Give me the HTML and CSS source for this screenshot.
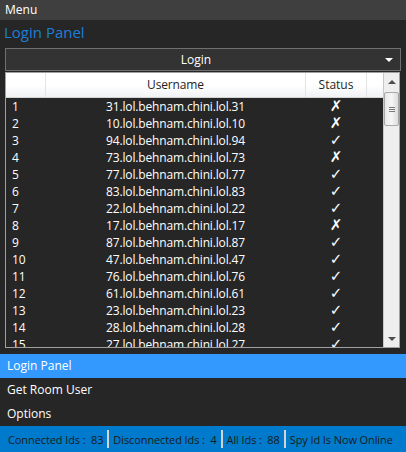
FILE: index.html
```html
<!DOCTYPE html>
<html>
<head>
<meta charset="utf-8">
<link rel="stylesheet" href="styles.css">
</head>
<body>
<div class="app">
  <div class="menubar">Menu</div>
  <div class="title">Login Panel</div>
  <div class="dropdown">
    <span class="dd-text">Login</span>
    <span class="dd-arrow"></span>
  </div>
  <div class="grid">
    <div class="grid-body">
      <div class="hdr">
        <div class="c-num"></div>
        <div class="c-user">Username</div>
        <div class="c-status">Status</div>
        <div class="c-fill"></div>
      </div>
      <div class="rows">
        <div class="row"><div class="c-num">1</div><div class="c-user">31.lol.behnam.chini.lol.31</div><div class="c-status">✗</div></div>
        <div class="row"><div class="c-num">2</div><div class="c-user">10.lol.behnam.chini.lol.10</div><div class="c-status">✗</div></div>
        <div class="row"><div class="c-num">3</div><div class="c-user">94.lol.behnam.chini.lol.94</div><div class="c-status">✓</div></div>
        <div class="row"><div class="c-num">4</div><div class="c-user">73.lol.behnam.chini.lol.73</div><div class="c-status">✗</div></div>
        <div class="row"><div class="c-num">5</div><div class="c-user">77.lol.behnam.chini.lol.77</div><div class="c-status">✓</div></div>
        <div class="row"><div class="c-num">6</div><div class="c-user">83.lol.behnam.chini.lol.83</div><div class="c-status">✓</div></div>
        <div class="row"><div class="c-num">7</div><div class="c-user">22.lol.behnam.chini.lol.22</div><div class="c-status">✓</div></div>
        <div class="row"><div class="c-num">8</div><div class="c-user">17.lol.behnam.chini.lol.17</div><div class="c-status">✗</div></div>
        <div class="row"><div class="c-num">9</div><div class="c-user">87.lol.behnam.chini.lol.87</div><div class="c-status">✓</div></div>
        <div class="row"><div class="c-num">10</div><div class="c-user">47.lol.behnam.chini.lol.47</div><div class="c-status">✓</div></div>
        <div class="row"><div class="c-num">11</div><div class="c-user">76.lol.behnam.chini.lol.76</div><div class="c-status">✓</div></div>
        <div class="row"><div class="c-num">12</div><div class="c-user">61.lol.behnam.chini.lol.61</div><div class="c-status">✓</div></div>
        <div class="row"><div class="c-num">13</div><div class="c-user">23.lol.behnam.chini.lol.23</div><div class="c-status">✓</div></div>
        <div class="row"><div class="c-num">14</div><div class="c-user">28.lol.behnam.chini.lol.28</div><div class="c-status">✓</div></div>
        <div class="row"><div class="c-num">15</div><div class="c-user">27.lol.behnam.chini.lol.27</div><div class="c-status">✓</div></div>
      </div>
    </div>
    <div class="vscroll">
      <div class="sb-btn"><span class="tri-up"></span></div>
      <div class="sb-thumb"><span class="grip"></span><span class="grip"></span><span class="grip"></span></div>
      <div class="sb-track"></div>
      <div class="sb-btn"><span class="tri-down"></span></div>
    </div>
  </div>
  <div class="nav">
    <div class="nav-item active">Login Panel</div>
    <div class="nav-item">Get Room User</div>
    <div class="nav-item">Options</div>
  </div>
  <div class="statusbar">
    <span class="st">Connected Ids :&nbsp; 83</span>
    <span class="sep"></span>
    <span class="st">Disconnected Ids :&nbsp; 4</span>
    <span class="sep"></span>
    <span class="st">All Ids :&nbsp; 88</span>
    <span class="sep"></span>
    <span class="st">Spy Id Is Now Online</span>
  </div>
</div>
</body>
</html>
```
FILE: styles.css
```css
html, body {
  margin: 0;
  padding: 0;
  background: #262626;
}
body {
  font-family: "Open Sans", "Noto Sans", sans-serif;
  font-size: 12px;
  color: #ffffff;
}
.app {
  width: 406px;
  height: 452px;
  display: flex;
  flex-direction: column;
  overflow: hidden;
  background: #262626;
}
.menubar {
  height: 20px;
  line-height: 20px;
  background: #3f3f3f;
  padding-left: 5px;
  flex: none;
}
.title {
  height: 28px;
  line-height: 24px;
  font-size: 15px;
  color: #1c7fd6;
  padding-left: 4px;
  flex: none;
}
.dropdown {
  flex: none;
  height: 21px;
  margin: 0 5px 1px 5px;
  border: 1px solid #6f6f6f;
  background: #333333;
  display: flex;
  align-items: center;
  position: relative;
}
.dd-text {
  flex: 1;
  text-align: center;
  padding-right: 14px;
}
.dd-arrow {
  position: absolute;
  right: 7px;
  top: 9px;
  width: 0;
  height: 0;
  border-left: 4px solid transparent;
  border-right: 4px solid transparent;
  border-top: 4px solid #ffffff;
}
.grid {
  flex: none;
  height: 274px;
  margin: 0 6px 0 5px;
  border: 1px solid #a0a0a0;
  display: flex;
  background: #262626;
}
.grid-body {
  flex: 1;
  overflow: hidden;
  display: flex;
  flex-direction: column;
}
.hdr {
  flex: none;
  height: 24px;
  display: flex;
  background: linear-gradient(#ffffff, #ffffff 50%, #f1f2f4);
  color: #1e1e1e;
  border-bottom: 1px solid #d5d5d5;
}
.hdr > div {
  border-right: 1px solid #e3e4e6;
  line-height: 24px;
  text-align: center;
}
.hdr .c-fill {
  flex: 1;
  border-right: none;
}
.c-num {
  width: 39px;
  flex: none;
}
.c-user {
  width: 259px;
  flex: none;
  text-align: center;
  letter-spacing: -0.15px;
}
.c-status {
  width: 60px;
  flex: none;
  text-align: center;
}
.row {
  height: 17px;
  line-height: 17px;
  display: flex;
}
.row > div {
  border-right: 1px solid transparent;
}
.row .c-num {
  padding-left: 6px;
  width: 33px;
}
.row .c-status {
  font-family: "DejaVu Sans", sans-serif;
  font-size: 15px;
  font-weight: bold;
}
.vscroll {
  flex: none;
  width: 15px;
  background: #eeeeee;
  border-left: 1px solid #c8c8c8;
  display: flex;
  flex-direction: column;
}
.sb-btn {
  height: 17px;
  display: flex;
  align-items: center;
  justify-content: center;
  flex: none;
}
.tri-up {
  width: 0;
  height: 0;
  border-left: 4px solid transparent;
  border-right: 4px solid transparent;
  border-bottom: 4px solid #4d4d4d;
}
.tri-down {
  width: 0;
  height: 0;
  border-left: 4px solid transparent;
  border-right: 4px solid transparent;
  border-top: 4px solid #4d4d4d;
}
.sb-thumb {
  flex: none;
  height: 34px;
  margin: 2px 0 0 0;
  border: 1px solid #a8a8a8;
  border-radius: 2px;
  background: linear-gradient(90deg, #e8e8e8, #f6f6f6 50%, #dcdcdc);
  display: flex;
  flex-direction: column;
  align-items: center;
  justify-content: center;
  gap: 1px;
  box-sizing: border-box;
}
.grip {
  display: block;
  width: 6px;
  height: 1px;
  background: #7a7a7a;
}
.sb-track {
  flex: 1;
}
.nav {
  flex: none;
  margin-top: 6px;
}
.nav-item {
  height: 24px;
  line-height: 24px;
  padding-left: 7px;
}
.nav-item.active {
  background: #3399ff;
}
.statusbar {
  flex: none;
  height: 26px;
  background: #007acc;
  color: #1a1a1a;
  display: flex;
  align-items: center;
  padding-left: 8px;
  white-space: nowrap;
  font-size: 11px;
  letter-spacing: -0.1px;
}
.st {
  flex: none;
}
.sep {
  flex: none;
  width: 2px;
  height: 18px;
  background: #d4d4d4;
  margin: 0 4px 0 4px;
}
```
